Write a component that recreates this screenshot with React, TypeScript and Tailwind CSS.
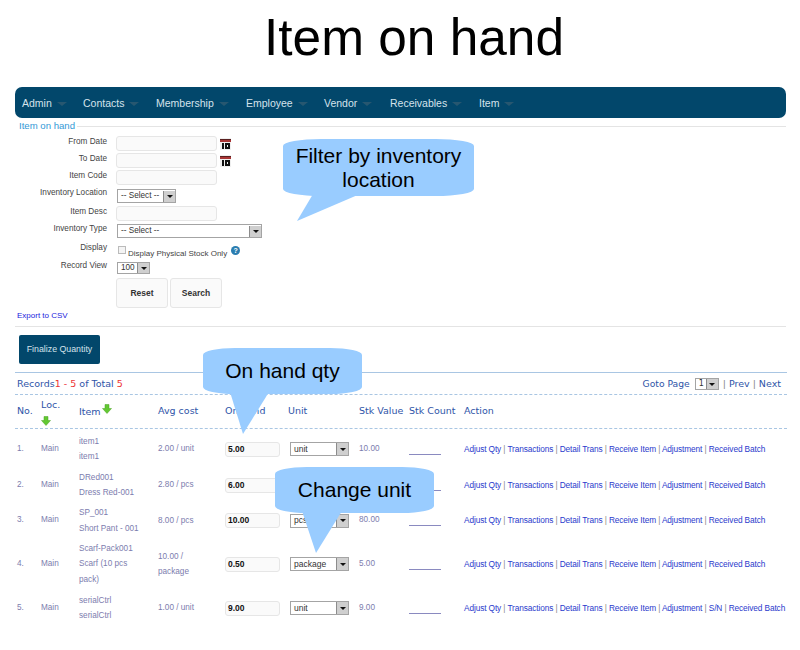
import React from "react";

const sans = "font-['Liberation_Sans',Arial,sans-serif]";
const wide = "font-['DejaVu_Sans',Verdana,sans-serif]";

function Caret() {
  return <span className="inline-block w-0 h-0 border-x-[3.5px] border-x-transparent border-t-[3.5px] border-t-[#111]" />;
}

function Select({ width, text, cls }: { width: number; text: string; cls: string }) {
  return (
    <div style={{ width }} className={`flex items-stretch bg-white border border-[#a4a4a4] shrink-0 ${cls}`}>
      <span className="flex-1 pl-[3px] flex items-center text-[#333] whitespace-nowrap overflow-hidden">{text}</span>
      <span className="w-[12px] bg-[#cfcfcf] border-l border-[#8c8c8c] flex items-center justify-center">
        <Caret />
      </span>
    </div>
  );
}

function Calendar() {
  return (
    <svg width="11" height="12" viewBox="0 0 11 12" className="ml-[3px] mt-[2px]">
      <rect x="0" y="0" width="11" height="12" fill="#efefef" />
      <rect x="0" y="1" width="11" height="3" fill="#a83434" />
      <rect x="0" y="1" width="11" height="1" fill="#5a2020" />
      <rect x="2" y="5" width="2" height="6" fill="#111" />
      <rect x="5" y="5" width="5" height="6" fill="#111" />
      <rect x="7" y="7" width="1" height="2" fill="#efefef" />
    </svg>
  );
}

function GreenArrow() {
  return (
    <svg width="10" height="10" viewBox="0 0 10 10" className="inline-block">
      <path d="M3 0.5h4v4h2.500L5 9.500 0.500 4.500H3z" fill="#62c832" stroke="#4aa322" strokeWidth="0.5" />
    </svg>
  );
}

function FormRow({ label, h, labelCls = "", children }: { label: string; h: number; labelCls?: string; children: React.ReactNode }) {
  return (
    <div style={{ height: h }} className="flex items-start">
      <div className={`w-[107px] mr-[9px] text-right text-[8.2px] leading-[11px] text-[#444] whitespace-nowrap ${labelCls}`}>{label}</div>
      {children}
    </div>
  );
}

function TextInput() {
  return <div className="w-[101px] h-[15px] rounded-[3px] bg-[#fafafa] border border-[#e6e6e6]" />;
}

const menu: [string, number][] = [
  ["Admin", 61], ["Contacts", 73], ["Membership", 90], ["Employee", 78], ["Vendor", 66], ["Receivables", 89], ["Item", 40],
];

const rows = [
  { n: "1.", h: 36, item: ["item1", "item1"], cost: ["2.00 / unit"], qty: "5.00", unit: "unit", val: "10.00", sn: false },
  { n: "2.", h: 36, item: ["DRed001", "Dress Red-001"], cost: ["2.80 / pcs"], qty: "6.00", unit: "", val: "", sn: false },
  { n: "3.", h: 35, item: ["SP_001", "Short Pant - 001"], cost: ["8.00 / pcs"], qty: "10.00", unit: "pcs", val: "80.00", sn: false },
  { n: "4.", h: 52, item: ["Scarf-Pack001", "Scarf (10 pcs", "pack)"], cost: ["10.00 /", "package"], qty: "0.50", unit: "package", val: "5.00", sn: false },
  { n: "5.", h: 36, item: ["serialCtrl", "serialCtrl"], cost: ["1.00 / unit"], qty: "9.00", unit: "unit", val: "9.00", sn: true },
];

function Callout({ left, top, w, h, tail, text }: { left: number; top: number; w: number; h: number; tail: string; text: string[] }) {
  const rx = w * 0.2;
  const ry = 7;
  const body = `M0 ${ry} A${rx} ${ry} 0 0 1 ${rx} 0 H${w - rx} A${rx} ${ry} 0 0 1 ${w} ${ry} V${h - ry} A${rx} ${ry} 0 0 1 ${w - rx} ${h} H${rx} A${rx} ${ry} 0 0 1 0 ${h - ry} Z`;
  return (
    <div style={{ left, top, width: w, height: h }} className="absolute">
      <svg width={w} height={h + 50} viewBox={`0 0 ${w} ${h + 50}`} className="absolute left-0 top-0">
        <path d={body} fill="#99ccff" />
        <path d={tail} fill="#99ccff" />
      </svg>
      <div style={{ height: h }} className={`relative flex flex-col items-center justify-center text-[21px] leading-[24px] text-black ${sans}`}>
        {text.map((t) => <span key={t}>{t}</span>)}
      </div>
    </div>
  );
}

export default function App() {
  return (
    <div className={`relative w-[800px] h-[650px] bg-white overflow-hidden ${sans}`}>
      <h1 className="h-[87px] pl-[264px] pt-[5px] text-[51.4px] leading-[64px] text-black font-normal">Item on hand</h1>

      <nav className="mx-[15px] w-[771px] h-[31px] rounded-[7px] bg-[#02476b] flex items-center pl-[7px] pt-[2px] text-[10.5px] text-[#d5e3ec]">
        {menu.map(([m, w]) => (
          <div key={m} style={{ width: w }} className="flex items-center shrink-0">
            <span>{m}</span>
            <span className="ml-[5px] mt-px w-0 h-0 border-x-[5px] border-x-transparent border-t-[4px] border-t-[#275770]" />
          </div>
        ))}
      </nav>

      <div className="flex items-center h-[16px] ml-[15px] w-[771px]">
        <span className="pl-[4px] pr-[2px] text-[9.6px] text-[#3399d6]">Item on hand</span>
        <span className="flex-1 h-px bg-[#e4e4e4]" />
      </div>

      <div className="pt-[2px]">
        <FormRow label="From Date" h={17}><TextInput /><Calendar /></FormRow>
        <FormRow label="To Date" h={17}><TextInput /><Calendar /></FormRow>
        <FormRow label="Item Code" h={18}><TextInput /></FormRow>
        <FormRow label="Inventory Location" h={18} labelCls="-mt-px"><div className="pl-px mt-px"><Select width={59} text="-- Select --" cls="h-[14px] text-[8.2px] pt-px" /></div></FormRow>
        <FormRow label="Item Desc" h={18}><TextInput /></FormRow>
        <FormRow label="Inventory Type" h={17} labelCls="-mt-px"><div className="pl-px"><Select width={145} text="-- Select --" cls="h-[14px] text-[8.2px] pt-px" /></div></FormRow>
        <FormRow label="Display" h={20} labelCls="mt-px">
          <div className="flex items-start pl-[2px] pt-[5px] text-[8px] text-[#444]">
            <span className="w-[8px] h-[8px] border border-[#bbb] bg-[#f4f4f4] mr-[2px]" />
            <span className="mt-[2px] whitespace-nowrap">Display Physical Stock Only</span>
            <span className="ml-[4px] w-[9px] h-[9px] rounded-full bg-[#2a7db0] text-white text-[7px] leading-[9px] text-center font-bold">?</span>
          </div>
        </FormRow>
        <FormRow label="Record View" h={17} labelCls="-mt-px"><div className="pl-px mt-px"><Select width={33} text="100" cls="h-[12px] text-[8.2px]" /></div></FormRow>
        <div className="flex pl-[116px] gap-[2px] h-[31px]">
          {["Reset", "Search"].map((b) => (
            <div key={b} className="w-[52px] h-[30px] rounded-[3px] bg-[#fafafa] border border-[#e6e6e6] flex items-center justify-center text-[8.5px] font-bold text-[#333]">{b}</div>
          ))}
        </div>
      </div>

      <div className="pl-[17px] pt-px h-[17px] text-[8px] leading-[12px] text-[#2222dd]">Export to CSV</div>
      <div className="ml-[15px] w-[771px] h-px bg-[#e4e4e4]" />

      <div className="mt-[8px] ml-[19px] w-[81px] h-[29px] rounded-[2px] bg-[#02476b] flex items-center justify-center text-[8.8px] text-[#d5e3ec]">Finalize Quantity</div>

      <div className="mt-[8px] ml-[15px] w-[772px] h-px bg-[#a9c6e3]" />

      <div className={`ml-[15px] w-[772px] h-[21px] pl-[2px] pt-[1px] pr-[6px] flex items-center justify-between text-[9.5px] text-[#2f55a8] ${wide}`}>
        <span>Records<span className="text-[#e33]">1 - 5</span> of Total <span className="text-[#e33]">5</span></span>
        <span className="flex items-center gap-[3px]">
          <span className="text-[9.2px] mr-[1px]">Goto Page</span>
          <Select width={24} text="1" cls="h-[12px] text-[8px] mx-px" />
          <span className="text-[#888]">|</span> Prev <span className="text-[#888]">|</span> Next
        </span>
      </div>
      <div className="ml-[15px] w-[772px] border-t border-dashed border-[#a9c6e3]" />

      <div className={`ml-[17px] h-[33px] flex items-center text-[9.5px] text-[#2f55a8] ${wide}`}>
        <div className="w-[24px]">No.</div>
        <div className="w-[38px] leading-[15px] mt-px">Loc.<br /><GreenArrow /></div>
        <div className="w-[79px] mt-px">Item<span className="relative -top-[3px] ml-px"><GreenArrow /></span></div>
        <div className="w-[67px]">Avg cost</div>
        <div className="w-[63px]">On hand</div>
        <div className="w-[71px]">Unit</div>
        <div className="w-[50px] whitespace-nowrap">Stk Value</div>
        <div className="w-[55px] whitespace-nowrap">Stk Count</div>
        <div>Action</div>
      </div>
      <div className="ml-[15px] w-[772px] border-t border-dashed border-[#a9c6e3]" />

      <div className="pt-[2px] text-[8.2px] text-[#7c7cae]">
        {rows.map((r) => (
          <div key={r.n} style={{ height: r.h }} className="flex items-center pl-[17px]">
            <div className="w-[24px]">{r.n}</div>
            <div className="w-[38px]">Main</div>
            <div className="w-[79px] leading-[15.5px]">{r.item.map((t, i) => <div key={i}>{t}</div>)}</div>
            <div className="w-[67px] leading-[15.5px]">{r.cost.map((t) => <div key={t}>{t}</div>)}</div>
            <div className="w-[65px]">
              <div className="w-[55px] h-[15px] rounded-[3px] bg-[#fafafa] border border-[#e6e6e6] pl-[2px] leading-[13px] text-[8.5px] font-bold text-[#111]">{r.qty}</div>
            </div>
            <div className="w-[69px]"><Select width={59} text={r.unit} cls="h-[14px] text-[8.5px]" /></div>
            <div className="w-[50px]">{r.val}</div>
            <div className="w-[55px] pt-[10px]"><div className="w-[32px] h-px bg-[#8a8ac0]" /></div>
            <div className="whitespace-nowrap text-[8.3px] text-[#2a3acc] tracking-[-0.014em]">
              Adjust Qty <span className="text-[#888]">|</span> Transactions <span className="text-[#888]">|</span> Detail Trans <span className="text-[#888]">|</span> Receive Item <span className="text-[#888]">|</span> Adjustment <span className="text-[#888]">|</span> {r.sn && <>S/N <span className="text-[#888]">|</span> </>}Received Batch
            </div>
          </div>
        ))}
      </div>

      <Callout left={283} top={139} w={191} h={57} tail="M30 55 L14 82 L77 55 Z" text={["Filter by inventory", "location"]} />
      <Callout left={203} top={348} w={159} h={46} tail="M27 44 L40 86 L66 44 Z" text={["On hand qty"]} />
      <Callout left={275} top={467} w={159} h={46} tail="M27 44 L41 86 L67 44 Z" text={["Change unit"]} />
    </div>
  );
}
